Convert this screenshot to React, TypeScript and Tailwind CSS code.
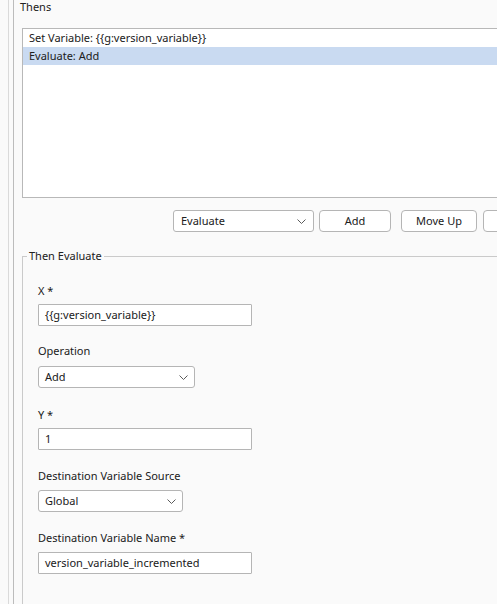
import React from "react";

function Chevron() {
  return (
    <svg width="9" height="5" viewBox="0 0 9 5" className="shrink-0">
      <polyline points="0.5,0.5 4.5,4.5 8.5,0.5" fill="none" stroke="#5a5a5a" strokeWidth="1" />
    </svg>
  );
}

function Select({ value, width }: { value: string; width: string }) {
  return (
    <div
      className={`flex h-[22px] items-center justify-between rounded-[3px] border border-[#b5b5b5] bg-white pl-[6px] pr-[6px] ${width}`}
    >
      <span>{value}</span>
      <Chevron />
    </div>
  );
}

function Input({ value }: { value: string }) {
  return (
    <div className="flex h-[22px] w-[214px] items-center rounded-[1px] border border-[#b5b5b5] bg-white pl-[6px]">
      {value}
    </div>
  );
}

function Button({ label, width }: { label: string; width: string }) {
  return (
    <div
      className={`flex h-[22px] shrink-0 items-center justify-center rounded-[4px] border border-[#b5b5b5] bg-white ${width}`}
    >
      {label}
    </div>
  );
}

export default function App() {
  return (
    <div
      className="h-[604px] w-[497px] overflow-hidden bg-[#fafafa] text-[11px] text-[#202020]"
      style={{ fontFamily: '"Noto Sans", "Open Sans", sans-serif' }}
    >
      <div className="ml-[8px] h-full border-l border-[#dadada]">
        <div className="ml-[4px] h-full border-l border-[#bcbcbc] pl-[8px]">
          <div className="h-[28px] -ml-[2px] leading-[13px]">Thens</div>

          <div className="h-[170px] w-[520px] border border-[#b8b8b8] bg-white">
            <div className="h-[18px] pl-[6px] leading-[17px]">Set Variable: {"{{g:version_variable}}"}</div>
            <div className="h-[18px] bg-[#c9daf1] pl-[6px] leading-[17px]">Evaluate: Add</div>
          </div>

          <div className="mt-[12px] ml-[151px] flex h-[23px] items-start">
            <Select value="Evaluate" width="w-[141px] shrink-0 pl-[7px] pr-[7px]" />
            <div className="ml-[5px]">
              <Button label="Add" width="w-[72px]" />
            </div>
            <div className="ml-[10px]">
              <Button label="Move Up" width="w-[76px]" />
            </div>
            <div className="ml-[6px]">
              <Button label="" width="w-[80px]" />
            </div>
          </div>

          <div className="relative mt-[23px] h-[400px] w-[520px] border-l border-t border-[#cacaca] pl-[15px] pt-[26px]">
            <span className="absolute -top-[9px] left-[4px] bg-[#fafafa] px-[2px] leading-[15px]">
              Then Evaluate
            </span>

            <div className="leading-[15px]">X *</div>
            <div className="mt-[6px]">
              <Input value="{{g:version_variable}}" />
            </div>

            <div className="mt-[17px] leading-[15px]">Operation</div>
            <div className="mt-[8px]">
              <Select value="Add" width="w-[157px]" />
            </div>

            <div className="mt-[19px] leading-[15px]">Y *</div>
            <div className="mt-[6px]">
              <Input value="1" />
            </div>

            <div className="mt-[18px] leading-[15px]">Destination Variable Source</div>
            <div className="mt-[7px]">
              <Select value="Global" width="w-[145px]" />
            </div>

            <div className="mt-[18px] leading-[15px]">Destination Variable Name *</div>
            <div className="mt-[7px]">
              <Input value="version_variable_incremented" />
            </div>
          </div>
        </div>
      </div>
    </div>
  );
}
